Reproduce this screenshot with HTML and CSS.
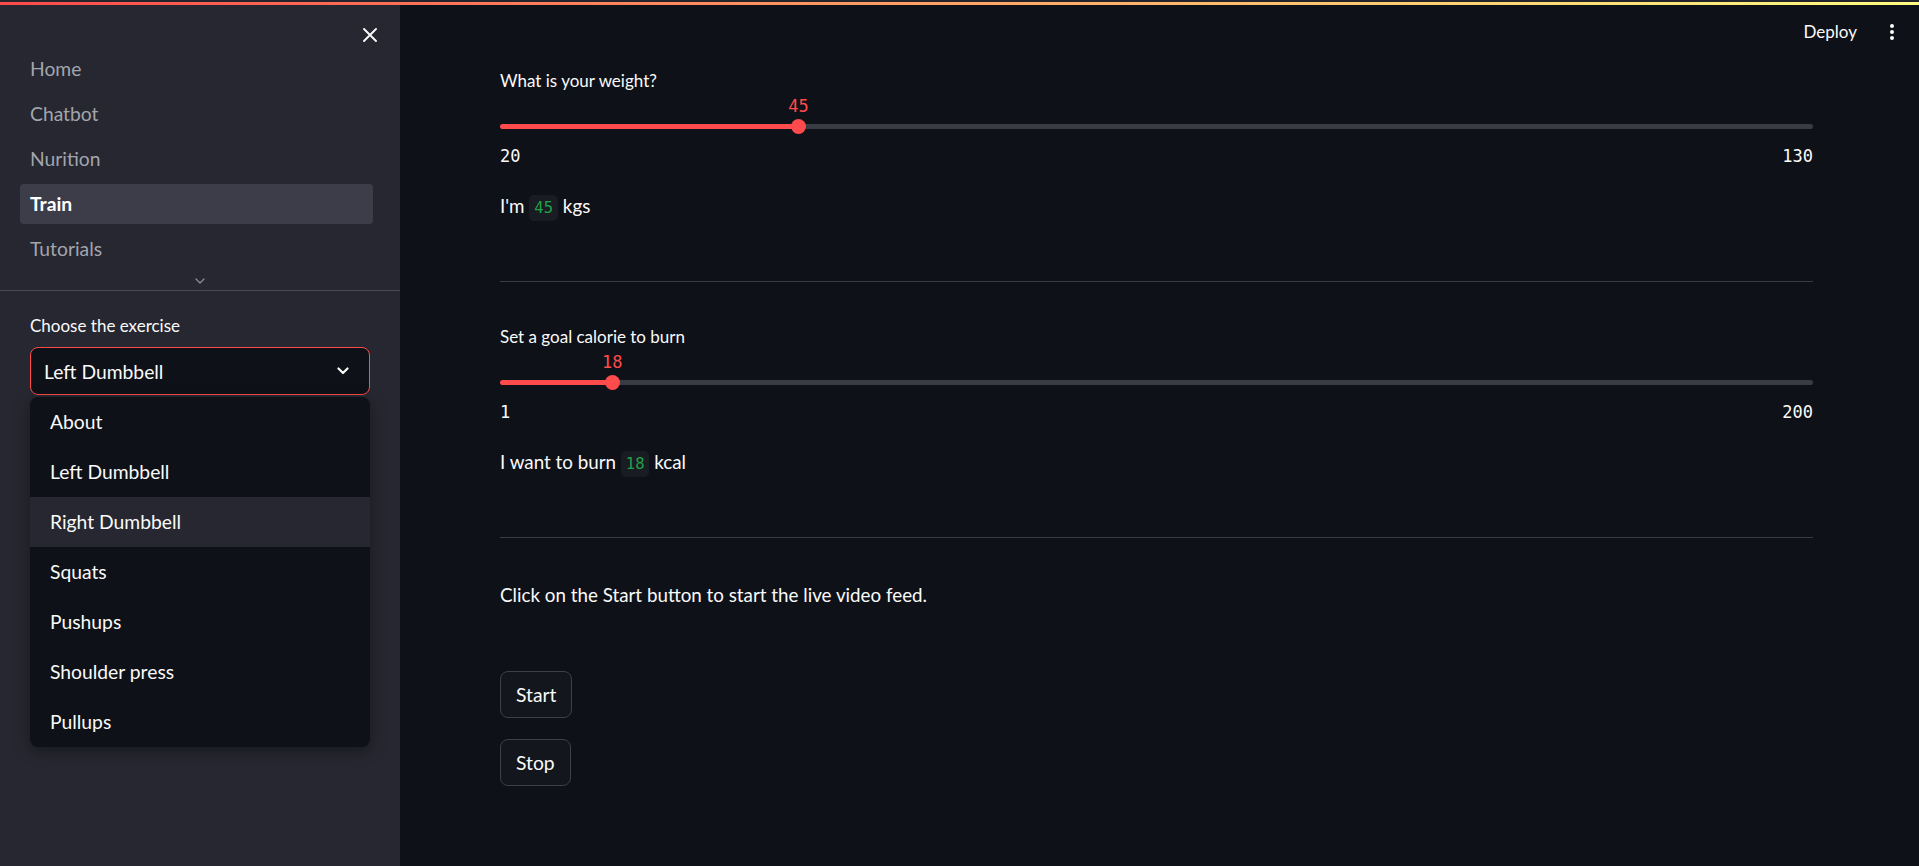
FILE: index.html
```html
<!DOCTYPE html>
<html lang="en">
<head>
<meta charset="utf-8">
<title>Train</title>
<link rel="stylesheet" href="styles.css">
</head>
<body>
<div class="app">
  <div class="decoration"></div>
  <div class="layout">
    <aside class="sidebar">
      <div class="sb-header">
        <button class="close-btn" aria-label="Close sidebar">
          <svg width="14" height="14" viewBox="0 0 14 14"><path d="M1 1L13 13M13 1L1 13" stroke="#fafafa" stroke-width="1.9" stroke-linecap="round"/></svg>
        </button>
      </div>
      <nav class="nav">
        <a class="nav-item">Home</a>
        <a class="nav-item">Chatbot</a>
        <a class="nav-item">Nurition</a>
        <a class="nav-item active">Train</a>
        <a class="nav-item">Tutorials</a>
      </nav>
      <div class="nav-more">
        <svg width="10" height="6" viewBox="0 0 10 6"><path d="M1 1L5 5L9 1" fill="none" stroke="#8b8d96" stroke-width="1.3" stroke-linecap="round" stroke-linejoin="round"/></svg>
      </div>
      <div class="sb-content">
        <div class="widget-label sb-label">Choose the exercise</div>
        <div class="select-wrap">
          <div class="select">
            <span class="select-value">Left Dumbbell</span>
            <svg class="select-chev" width="12" height="8" viewBox="0 0 12 8"><path d="M1.5 1.5L6 6L10.5 1.5" fill="none" stroke="#fafafa" stroke-width="2.2" stroke-linecap="round" stroke-linejoin="round"/></svg>
          </div>
          <ul class="menu">
            <li class="menu-item">About</li>
            <li class="menu-item">Left Dumbbell</li>
            <li class="menu-item hover">Right Dumbbell</li>
            <li class="menu-item">Squats</li>
            <li class="menu-item">Pushups</li>
            <li class="menu-item">Shoulder press</li>
            <li class="menu-item">Pullups</li>
          </ul>
        </div>
      </div>
    </aside>
    <main class="main">
      <header class="header">
        <span class="deploy">Deploy</span>
        <span class="kebab"><i></i><i></i><i></i></span>
      </header>
      <section class="content">
        <div class="widget-label">What is your weight?</div>
        <div class="slider" style="--p: 22.727%">
          <div class="slider-top"><span class="thumb-value">45</span></div>
          <div class="slider-track"><div class="rail"></div><div class="thumb"></div></div>
          <div class="ticks"><span>20</span><span>130</span></div>
        </div>
        <p class="text first-after">I'm <code>45</code> kgs</p>
        <hr class="divider">
        <div class="widget-label">Set a goal calorie to burn</div>
        <div class="slider" style="--p: 8.543%">
          <div class="slider-top"><span class="thumb-value">18</span></div>
          <div class="slider-track"><div class="rail"></div><div class="thumb"></div></div>
          <div class="ticks"><span>1</span><span>200</span></div>
        </div>
        <p class="text first-after">I want to burn <code>18</code> kcal</p>
        <hr class="divider">
        <p class="text info">Click on the Start button to start the live video feed.</p>
        <div class="buttons">
          <button class="btn">Start</button>
          <button class="btn">Stop</button>
        </div>
      </section>
    </main>
  </div>
</div>
</body>
</html>
```
FILE: styles.css
```css
* { box-sizing: border-box; }
html, body { margin: 0; padding: 0; }
body {
  background: #0e1117;
  color: #fafafa;
  font-family: "Lato", "Noto Sans", sans-serif;
  overflow: hidden;
}
.app { display: flex; flex-direction: column; height: 866px; }
.decoration {
  height: 5px;
  border-top: 2px solid #24252c;
  background: linear-gradient(90deg, #ff4b4b 0%, #fffd80 100%);
  flex: none;
}
.layout { display: flex; flex: 1; min-height: 0; }

/* Sidebar */
.sidebar {
  width: 400px;
  flex: none;
  background: #262730;
  display: flex;
  flex-direction: column;
}
.sb-header {
  height: 44px;
  display: flex;
  justify-content: flex-end;
  align-items: flex-start;
  padding: 23px 23px 0 0;
}
.close-btn {
  background: none; border: 0; padding: 0; margin: 0;
  width: 14px; height: 14px; display: block; cursor: pointer;
}
.close-btn svg { display: block; }
.nav {
  display: flex;
  flex-direction: column;
  gap: 5px;
  padding: 0 27px 0 20px;
}
.nav-item {
  height: 40px;
  line-height: 40px;
  padding-left: 10px;
  border-radius: 4px;
  font-size: 19.3px;
  color: #a3a5ad;
}
.nav-item.active {
  background: #3c3d49;
  color: #ffffff;
  font-weight: 700;
}
.nav-more {
  height: 22px;
  display: flex;
  justify-content: center;
  align-items: flex-start;
  padding-top: 9px;
  border-bottom: 1px solid #484a55;
}
.nav-more svg { display: block; }
.sb-content { padding: 24px 30px 0; }
.widget-label {
  height: 24px;
  line-height: 22px;
  font-size: 17px;
  color: #fafafa;
}
.sb-label { margin-bottom: 8px; }
.select-wrap { position: relative; }
.select {
  height: 48px;
  border: 1px solid #ff4b4b;
  border-radius: 8px;
  background: #0e1117;
  display: flex;
  align-items: center;
  justify-content: space-between;
  padding: 0 20px 0 13px;
}
.select-value { font-size: 19.3px; color: #fafafa; }
.select-chev { display: block; }
.menu {
  position: absolute;
  top: calc(100% + 2px);
  left: 0;
  right: 0;
  margin: 0;
  padding: 0;
  list-style: none;
  background: #0e1117;
  border-radius: 8px;
  box-shadow: 0 4px 16px rgba(0, 0, 0, 0.35);
  overflow: hidden;
}
.menu-item {
  height: 50px;
  line-height: 50px;
  padding-left: 20px;
  font-size: 19.3px;
  color: #fafafa;
}
.menu-item.hover { background: #262730; }

/* Main */
.main { flex: 1; display: flex; flex-direction: column; min-width: 0; }
.header {
  height: 65px;
  flex: none;
  display: flex;
  justify-content: flex-end;
  align-items: center;
  align-self: stretch;
  padding: 15px 25px 26px 0;
  gap: 33px;
}
.deploy { font-size: 17px; line-height: 24px; color: #fafafa; }
.kebab { display: flex; flex-direction: column; gap: 1.6px; width: 4px; }
.kebab i { display: block; width: 4px; height: 4px; border-radius: 50%; background: #fafafa; }

.content { padding: 0 106px 0 100px; display: flex; flex-direction: column; }
.slider { position: relative; }
.slider-top { position: relative; height: 24px; }
.thumb-value {
  position: absolute;
  left: var(--p);
  transform: translateX(-50%);
  line-height: 24px;
  font-family: "DejaVu Sans Mono", "Liberation Mono", monospace;
  font-size: 17px;
  color: #ff4b4b;
}
.slider-track { position: relative; height: 17px; display: flex; align-items: center; }
.rail {
  width: 100%;
  height: 5px;
  border-radius: 3px;
  background: linear-gradient(90deg, #ff4b4b 0, #ff4b4b var(--p), #3a3c45 var(--p), #3a3c45 100%);
}
.thumb {
  position: absolute;
  top: 1px;
  left: var(--p);
  width: 15px;
  height: 15px;
  margin-left: -7.5px;
  border-radius: 50%;
  background: #ff4b4b;
}
.ticks {
  display: flex;
  justify-content: space-between;
  margin-top: 11px;
  line-height: 20px;
  font-family: "DejaVu Sans Mono", "Liberation Mono", monospace;
  font-size: 17px;
  color: #fafafa;
}
.text {
  margin: 0;
  height: 30px;
  font-size: 18.8px;
  line-height: 30px;
  color: #fafafa;
}
.text.first-after { margin-top: 25px; }
.text code {
  font-family: "DejaVu Sans Mono", "Liberation Mono", monospace;
  font-size: 15.5px;
  line-height: 1;
  color: #21a148;
  background: #1a1c23;
  padding: 4px 5px;
  border-radius: 5px;
}
.divider {
  margin: 60px 0 44px;
  border: 0;
  height: 1px;
  flex: none;
  background: #3a3c42;
}
.text.info { margin-top: -2px; }
.buttons {
  margin-top: 61px;
  display: flex;
  flex-direction: column;
  align-items: flex-start;
  gap: 21px;
}
.btn {
  height: 47px;
  padding: 0 15px;
  border: 1px solid #3d4047;
  border-radius: 8px;
  background: #13161d;
  color: #fafafa;
  font-family: "Lato", "Noto Sans", sans-serif;
  font-size: 19.3px;
}
```
